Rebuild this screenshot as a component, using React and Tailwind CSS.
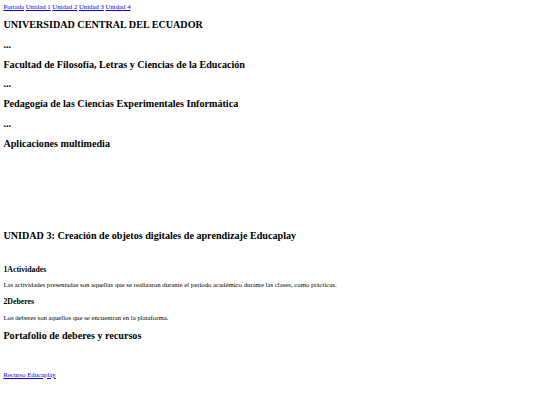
export default function App() {
  const navLinks = ["Portada", "Unidad 1", "Unidad 2", "Unidad 3", "Unidad 4"];
  const headings = [
    "UNIVERSIDAD CENTRAL DEL ECUADOR",
    "...",
    "Facultad de Filosofía, Letras y Ciencias de la Educación",
    "...",
    "Pedagogía de las Ciencias Experimentales Informática",
    "...",
    "Aplicaciones multimedia",
  ];

  return (
    <div className="min-h-[405px] bg-white px-[3.4px] pt-[3px] text-black font-['Liberation_Serif',serif]">
      <nav className="text-[6.75px] leading-[8px]">
        {navLinks.map((label, i) => (
          <span key={label}>
            <a href="#" className="text-[#0000ee] underline">
              {label}
            </a>
            {i < navLinks.length - 1 ? " " : null}
          </span>
        ))}
      </nav>

      <div className="mt-[8px] flex flex-col gap-[7.8px]">
        {headings.map((text, i) => (
          <h2 key={i} className="text-[10.15px] leading-[12px] font-bold">
            {text}
          </h2>
        ))}
      </div>

      <h2 className="mt-[80px] text-[10.15px] leading-[12px] font-bold">
        UNIDAD 3: Creación de objetos digitales de aprendizaje Educaplay
      </h2>

      <h3 className="mt-[23px] text-[7.8px] leading-[9px] font-bold">1Actividades</h3>
      <p className="mt-[7px] text-[6.75px] leading-[8px]">
        Las actividades presentadas son aquellas que se realizaron durante el periodo académico durante las clases, como prácticas.
      </p>
      <h3 className="mt-[8px] text-[7.8px] leading-[9px] font-bold">2Deberes</h3>
      <p className="mt-[8px] text-[6.75px] leading-[8px]">
        Los deberes son aquellos que se encuentran en la plataforma.
      </p>

      <h2 className="mt-[8px] text-[10.15px] leading-[12px] font-bold">Portafolio de deberes y recursos</h2>

      <p className="mt-[29px] text-[6.75px] leading-[8px]">
        <a href="#" className="text-[#0000ee] underline">
          Recurso Educaplay
        </a>
      </p>
    </div>
  );
}
